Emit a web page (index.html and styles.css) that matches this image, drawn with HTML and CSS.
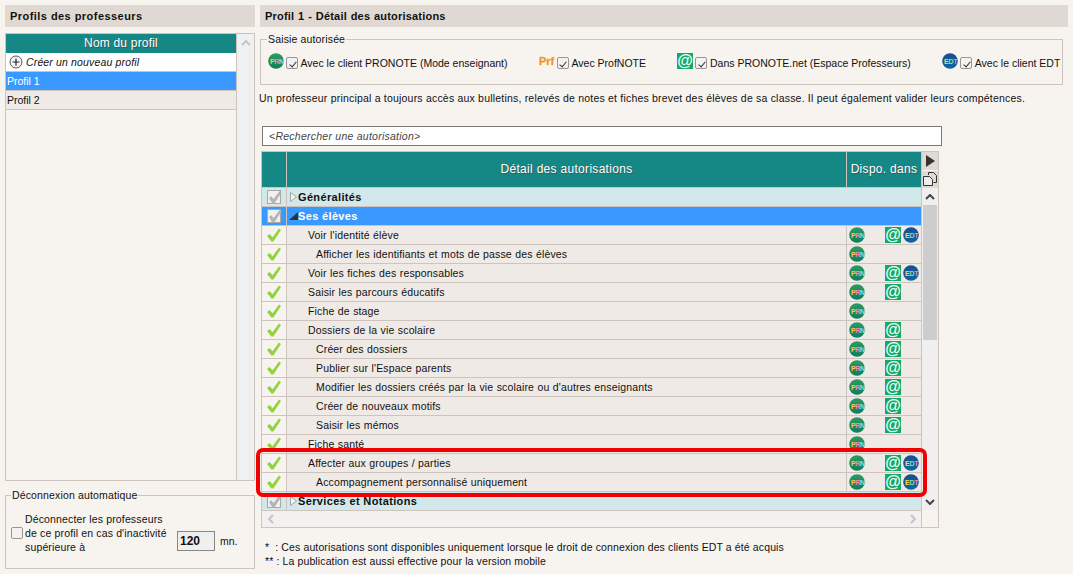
FILE: index.html
```html
<!DOCTYPE html>
<html lang="fr">
<head>
<meta charset="utf-8">
<title>Profils des professeurs</title>
<link rel="stylesheet" href="styles.css">
</head>
<body>
<svg class="defs" width="0" height="0" aria-hidden="true">
  <defs>
    <linearGradient id="gp" x1="0" y1="0" x2="0" y2="1"><stop offset="0" stop-color="#2f9a62"/><stop offset="1" stop-color="#0c7f5c"/></linearGradient>
    <linearGradient id="ge" x1="0" y1="0" x2="0" y2="1"><stop offset="0" stop-color="#1b4e90"/><stop offset="1" stop-color="#0b68a0"/></linearGradient>
    <symbol id="prn" viewBox="0 0 16 16">
      <circle cx="8" cy="8" r="7.8" fill="url(#gp)"/>
      <text x="2" y="10.8" class="t" fill="#f6c94a">P</text>
      <text x="6.3" y="10.8" class="t" fill="#f08ab0">R</text>
      <text x="11" y="10.8" class="t" fill="#8fdcee">N</text>
    </symbol>
    <symbol id="edt" viewBox="0 0 16 16">
      <circle cx="8" cy="8" r="7.8" fill="url(#ge)"/>
      <text x="2" y="10.8" class="t" fill="#f6d84a">E</text>
      <text x="6.4" y="10.8" class="t" fill="#8fe0a0">D</text>
      <text x="11.2" y="10.8" class="t" fill="#f08ab0">T</text>
    </symbol>
    <symbol id="at" viewBox="0 0 16 16">
      <rect width="16" height="16" fill="#14a86c"/>
      <text x="8" y="13" class="a" text-anchor="middle" fill="#e9fff4">@</text>
    </symbol>
    <symbol id="prf" viewBox="0 0 16 16">
      <text x="0" y="12" class="p" fill="#e8801c" stroke="#f8c040" stroke-width=".4">Prf</text>
    </symbol>
    <symbol id="ok" viewBox="0 0 16 16">
      <path d="M1 9l2.6-2 3 3.2L13 1.5l2 1.4-7.6 11.6h-2z" fill="#93d33f"/>
    </symbol>
    <symbol id="grey" viewBox="0 0 16 16">
      <rect x="1.5" y="1.5" width="13" height="13" fill="#f0f0f0" stroke="#a8a8a8"/>
      <path d="M3 9l2.2-1.8 2.4 2.8L13.6 2l1.9 1.4-7.2 11.1h-2z" fill="#b4b4b4"/>
    </symbol>
    <symbol id="plus" viewBox="0 0 14 14">
      <circle cx="7" cy="7" r="6" fill="#f4f4f4" stroke="#555"/>
      <path d="M3.5 7h7M7 3.5v7" stroke="#222" stroke-width="1.2"/>
    </symbol>
    <symbol id="copy" viewBox="0 0 14 14">
      <path d="M5.5 3V.5h5l3 3v7h-3" fill="none" stroke="#333"/>
      <path d="M.5 4.5h6l3 3v6h-9z" fill="#eee" stroke="#333"/>
    </symbol>
    <symbol id="twc" viewBox="0 0 9 12">
      <path d="M1.5 1.5l6 4.5-6 4.5z" fill="#f6f6f6" stroke="#a4a4a4"/>
    </symbol>
  </defs>
</svg>

<div class="page">
  <aside class="left">
    <h2 class="bar">Profils des professeurs</h2>
    <div class="plist">
      <div class="plist-main">
        <div class="thead">Nom du profil</div>
        <div class="prow new"><svg class="ic14"><use href="#plus"/></svg><span>Créer un nouveau profil</span></div>
        <div class="prow sel">Profil 1</div>
        <div class="prow">Profil 2</div>
      </div>
      <div class="plist-scroll"><svg class="chev" viewBox="0 0 10 6"><path d="M1 5l4-4 4 4" fill="none" stroke="#c4c4c4" stroke-width="2"/></svg></div>
    </div>
    <fieldset class="auto">
      <legend>Déconnexion automatique</legend>
      <div class="auto-body">
        <span class="cb"></span>
        <p class="auto-text">Déconnecter les professeurs<br>de ce profil en cas d'inactivité<br>supérieure à</p>
        <span class="num">120</span>
        <span class="unit">mn.</span>
      </div>
    </fieldset>
  </aside>

  <main class="right">
    <h2 class="bar wide">Profil 1 - Détail des autorisations</h2>
    <fieldset class="saisie">
      <legend>Saisie autorisée</legend>
      <div class="opts">
        <label class="opt"><svg class="ic16"><use href="#prn"/></svg><span class="cb on"></span>Avec le client PRONOTE (Mode enseignant)</label>
        <label class="opt"><svg class="ic16"><use href="#prf"/></svg><span class="cb on"></span>Avec ProfNOTE</label>
        <label class="opt"><svg class="ic16"><use href="#at"/></svg><span class="cb on"></span>Dans PRONOTE.net (Espace Professeurs)</label>
        <label class="opt"><svg class="ic16"><use href="#edt"/></svg><span class="cb on"></span>Avec le client EDT</label>
      </div>
    </fieldset>
    <p class="note">Un professeur principal a toujours accès aux bulletins, relevés de notes et fiches brevet des élèves de sa classe. Il peut également valider leurs compétences.</p>
    <div class="search">&lt;Rechercher une autorisation&gt;</div>

    <div class="grid">
      <div class="ghead">
        <div class="gh h1"></div>
        <div class="gh h2">Détail des autorisations</div>
        <div class="gh h3">Dispo. dans</div>
        <div class="gtools">
          <span class="tool"><svg class="tri" viewBox="0 0 9 12"><path d="M0 0l9 6-9 6z" fill="#333"/></svg></span>
          <span class="tool"><svg class="ic14"><use href="#copy"/></svg></span>
        </div>
      </div>
      <div class="gbody">
        <div class="rows">
          <div class="row group"><div class="c1"><svg class="ic16"><use href="#grey"/></svg></div><div class="c2"><svg class="tw"><use href="#twc"/></svg>Généralités</div><div class="c3"></div></div>
          <div class="row group sel"><div class="c1"><svg class="ic16"><use href="#grey"/></svg></div><div class="c2"><i class="tw open"></i>Ses élèves</div><div class="c3"></div></div>

          <div class="row l1"><div class="c1"><svg class="ic16"><use href="#ok"/></svg></div><div class="c2">Voir l'identité élève</div><div class="c3"><svg class="ic16"><use href="#prn"/></svg><svg class="ic16 s2"><use href="#at"/></svg><svg class="ic16 s3"><use href="#edt"/></svg></div></div>
          <div class="row l2"><div class="c1"><svg class="ic16"><use href="#ok"/></svg></div><div class="c2">Afficher les identifiants et mots de passe des élèves</div><div class="c3"><svg class="ic16"><use href="#prn"/></svg></div></div>
          <div class="row l1"><div class="c1"><svg class="ic16"><use href="#ok"/></svg></div><div class="c2">Voir les fiches des responsables</div><div class="c3"><svg class="ic16"><use href="#prn"/></svg><svg class="ic16 s2"><use href="#at"/></svg><svg class="ic16 s3"><use href="#edt"/></svg></div></div>
          <div class="row l1"><div class="c1"><svg class="ic16"><use href="#ok"/></svg></div><div class="c2">Saisir les parcours éducatifs</div><div class="c3"><svg class="ic16"><use href="#prn"/></svg><svg class="ic16 s2"><use href="#at"/></svg></div></div>
          <div class="row l1"><div class="c1"><svg class="ic16"><use href="#ok"/></svg></div><div class="c2">Fiche de stage</div><div class="c3"><svg class="ic16"><use href="#prn"/></svg></div></div>
          <div class="row l1"><div class="c1"><svg class="ic16"><use href="#ok"/></svg></div><div class="c2">Dossiers de la vie scolaire</div><div class="c3"><svg class="ic16"><use href="#prn"/></svg><svg class="ic16 s2"><use href="#at"/></svg></div></div>
          <div class="row l2"><div class="c1"><svg class="ic16"><use href="#ok"/></svg></div><div class="c2">Créer des dossiers</div><div class="c3"><svg class="ic16"><use href="#prn"/></svg><svg class="ic16 s2"><use href="#at"/></svg></div></div>
          <div class="row l2"><div class="c1"><svg class="ic16"><use href="#ok"/></svg></div><div class="c2">Publier sur l'Espace parents</div><div class="c3"><svg class="ic16"><use href="#prn"/></svg><svg class="ic16 s2"><use href="#at"/></svg></div></div>
          <div class="row l2"><div class="c1"><svg class="ic16"><use href="#ok"/></svg></div><div class="c2">Modifier les dossiers créés par la vie scolaire ou d'autres enseignants</div><div class="c3"><svg class="ic16"><use href="#prn"/></svg><svg class="ic16 s2"><use href="#at"/></svg></div></div>
          <div class="row l2"><div class="c1"><svg class="ic16"><use href="#ok"/></svg></div><div class="c2">Créer de nouveaux motifs</div><div class="c3"><svg class="ic16"><use href="#prn"/></svg><svg class="ic16 s2"><use href="#at"/></svg></div></div>
          <div class="row l2"><div class="c1"><svg class="ic16"><use href="#ok"/></svg></div><div class="c2">Saisir les mémos</div><div class="c3"><svg class="ic16"><use href="#prn"/></svg><svg class="ic16 s2"><use href="#at"/></svg></div></div>
          <div class="row l1"><div class="c1"><svg class="ic16"><use href="#ok"/></svg></div><div class="c2">Fiche santé</div><div class="c3"><svg class="ic16"><use href="#prn"/></svg></div></div>
          <div class="row l1"><div class="c1"><svg class="ic16"><use href="#ok"/></svg></div><div class="c2">Affecter aux groupes / parties</div><div class="c3"><svg class="ic16"><use href="#prn"/></svg><svg class="ic16 s2"><use href="#at"/></svg><svg class="ic16 s3"><use href="#edt"/></svg></div></div>
          <div class="row l2"><div class="c1"><svg class="ic16"><use href="#ok"/></svg></div><div class="c2">Accompagnement personnalisé uniquement</div><div class="c3"><svg class="ic16"><use href="#prn"/></svg><svg class="ic16 s2"><use href="#at"/></svg><svg class="ic16 s3"><use href="#edt"/></svg></div></div>
          <div class="row group"><div class="c1"><svg class="ic16"><use href="#grey"/></svg></div><div class="c2"><svg class="tw"><use href="#twc"/></svg>Services et Notations</div><div class="c3"></div></div>
        </div>
        <div class="vscroll">
          <svg class="chev up" viewBox="0 0 10 6"><path d="M1 5l4-4 4 4" fill="none" stroke="#444" stroke-width="2"/></svg>
          <div class="thumb"></div>
          <svg class="chev down" viewBox="0 0 10 6"><path d="M1 1l4 4 4-4" fill="none" stroke="#444" stroke-width="2"/></svg>
        </div>
      </div>
      <div class="hscroll">
        <svg class="hchev" viewBox="0 0 6 10"><path d="M5 1L1 5l4 4" fill="none" stroke="#c4c4c4" stroke-width="2"/></svg>
        <svg class="hchev" viewBox="0 0 6 10"><path d="M1 1l4 4-4 4" fill="none" stroke="#c4c4c4" stroke-width="2"/></svg>
      </div>
    </div>

    <p class="foot">* &nbsp;: Ces autorisations sont disponibles uniquement lorsque le droit de connexion des clients EDT a été acquis<br>** : La publication est aussi effective pour la version mobile</p>
  </main>
</div>
<div class="highlight"></div>
</body>
</html>
```

FILE: styles.css
```css
* { box-sizing: border-box; }
html, body { margin: 0; height: 100%; }
body {
  background: #f7f3ef;
  color: #111;
  font: 10.5px/14px "Liberation Sans", Arial, sans-serif;
  overflow: hidden;
  position: relative;
}
.defs { position: absolute; }
.t { font: bold 7px "Liberation Sans", sans-serif; letter-spacing: 0; word-spacing: 0; }
.a { font: bold 16px "Liberation Sans", sans-serif; letter-spacing: 0; }
.p { font: bold 11px "Liberation Sans", sans-serif; letter-spacing: 0; }

.page { display: flex; gap: 5px; height: 574px; padding: 5px; }
.left { width: 250px; display: flex; flex-direction: column; }
.right { width: 808px; display: flex; flex-direction: column; }

.bar {
  margin: 0;
  height: 22px;
  flex: none;
  background: #e0d9d3;
  padding-left: 5px;
  font: bold 11px/22px "Liberation Sans", Arial, sans-serif;
  letter-spacing: .45px;
  color: #111;
}
.bar.wide { letter-spacing: .2px; word-spacing: .5px; }

/* profile list */
.plist {
  margin-top: 6px;
  height: 448px;
  flex: none;
  display: flex;
  border: 1px solid #cdc5bd;
}
.plist-main { flex: 1; background: #f7f3ef; border-right: 1px solid #cdc5bd; }
.thead {
  height: 19px;
  background: #158784;
  color: #fff;
  text-align: center;
  font-size: 12px;
  line-height: 19px;
  text-shadow: 1px 1px 0 #3c5a58;
  letter-spacing: .2px;
}
.prow {
  height: 19px;
  line-height: 18px;
  padding-left: 1px;
  background: #efeae6;
  border-bottom: 1px solid #cdc5bd;
}
.prow.new {
  background: #fff;
  font-style: italic;
  display: flex;
  align-items: center;
  gap: 3px;
  padding-left: 3px;
  letter-spacing: .15px;
}
.prow.sel { background: #3a99ff; color: #fff; }
.plist-scroll { width: 17px; background: #eff0f2; display: flex; justify-content: center; padding-top: 6px; }
.chev { width: 10px; height: 6px; display: block; flex: none; }
.ic14 { width: 14px; height: 14px; flex: none; }
.ic16 { width: 16px; height: 16px; flex: none; display: block; }

/* fieldsets */
fieldset { margin: 0; padding: 0; border: 1px solid #cdc5bd; min-width: 0; }
legend { padding: 0 1px; margin-left: 6px; line-height: 12px; letter-spacing: .15px; }

.auto { margin-top: auto; height: 80px; flex: none; }
.auto legend { margin-left: 5px; }
.auto-body { display: flex; align-items: center; padding: 11px 0 0 5px; }
.cb {
  width: 12px; height: 12px; flex: none;
  background: #f4f2f1;
  border: 1px solid #9a9590;
  border-radius: 2px;
  position: relative;
}
.cb.on::after {
  content: "";
  position: absolute; left: 3.5px; top: 1.5px;
  width: 3px; height: 6px;
  border: solid #333;
  border-width: 0 1.5px 1.5px 0;
  transform: rotate(40deg);
}
.auto-text { margin: 0 0 0 2px; width: 152px; white-space: nowrap; letter-spacing: .15px; }
.num {
  width: 38px; height: 20px; margin-top: 16px;
  border: 1px solid #8a8580;
  background: #efefef;
  font-weight: bold;
  line-height: 18px;
  padding-left: 2px;
  font-size: 12px;
}
.unit { margin: 16px 0 0 5px; }

.saisie { height: 52px; margin-top: 6px; width: 803px; flex: none; }
.opts { display: flex; gap: 31.5px; padding: 9px 0 0 7px; }
.opt { display: flex; align-items: center; white-space: nowrap; height: 18px; }
.opt .ic16 { margin-top: -4px; }
.opt .cb { margin: 0 2.5px 0 2px; }

.note { margin: 6px 0 0 -1px; white-space: nowrap; line-height: 14px; letter-spacing: .2px; }

.search {
  margin: 21px 0 0 2px;
  width: 680px; height: 20px;
  flex: none;
  background: #fff;
  border: 1px solid #807870;
  font-style: italic;
  color: #444;
  padding-left: 6px;
  line-height: 19px;
  letter-spacing: .25px;
}

/* authorisation table */
.grid { margin: 5px 0 0 1px; width: 678px; height: 377px; flex: none; border: 1px solid #cdc5bd; border-top: 0; display: flex; flex-direction: column; }
.ghead { display: flex; height: 37px; flex: none; border-top: 1px solid #cdc5bd; }
.gh {
  background: #158784;
  color: #fff;
  font-size: 12px;
  line-height: 35px;
  letter-spacing: .3px;
  text-align: center;
  text-shadow: 1px 1px 0 #3c5a58;
  border-bottom: 1px solid #cdc5bd;
  flex: none;
}
.h1 { width: 24px; }
.h2 { width: 560px; border-left: 1px solid #cdc5bd; }
.h3 { width: 75px; border-left: 1px solid #cdc5bd; white-space: nowrap; }
.c1 { width: 25px; flex: none; }
.c2 { width: 559px; flex: none; }
.c3 { width: 75px; flex: none; }
.gtools { flex: 1; display: flex; flex-direction: column; gap: 1px; border-left: 1px solid #cdc5bd; }
.tool { height: 17px; flex: 1; background: #e0dad4; display: flex; align-items: center; justify-content: center; }
.tri { width: 9px; height: 12px; }

.gbody { display: flex; height: 322px; flex: none; }
.rows { flex: none; width: 659px; overflow: hidden; }
.row { display: flex; height: 19px; border-bottom: 1px solid #cdc5bd; }
.row > div { display: flex; align-items: center; }
.row .c1 { background: #f7f3ef; justify-content: center; border-right: 1px solid #cdc5bd; }
.row .c2 { background: #efeae6; white-space: nowrap; letter-spacing: .15px; word-spacing: .3px; }
.row .c3 { background: #efeae6; border-left: 1px solid #cdc5bd; padding-left: 2px; }
.l1 .c2 { padding-left: 21px; }
.l2 .c2 { padding-left: 29px; }
.s2 { margin-left: 20px; }
.s3 { margin-left: 2px; }

.row.group > div { background: #d3e8ea; }
.row.group .c1 { background: #d3e8ea; }
.row.group .c2 { font-weight: bold; font-size: 11px; letter-spacing: .35px; word-spacing: 0; padding-left: 2px; }
.row.group.sel > div { background: #3a99ff; color: #fff; }
.row.group .c3 { border-left: 0; }
.tw { width: 9px; height: 12px; flex: none; display: block; }
.tw.open { height: 8px; background: #333; clip-path: polygon(100% 0, 100% 100%, 0 100%); }

.vscroll { flex: 1; background: #f0efee; border-left: 1px solid #cdc5bd; position: relative; display: flex; flex-direction: column; align-items: center; padding-top: 6px; }
.thumb { position: absolute; top: 17px; left: 0; right: 0; height: 135px; background: #cdcdcd; margin: 0 1px; }
.vscroll .chev.down { margin-top: auto; margin-bottom: 5px; }

.hscroll { flex: 1; background: #f3f1ef; border-top: 1px solid #cdc5bd; border-right: 1px solid #cdc5bd; width: 660px; display: flex; justify-content: space-between; align-items: center; padding: 0 5px 0 6px; }
.hchev { width: 6px; height: 10px; }

.foot { margin: 12px 0 0 5px; line-height: 14px; letter-spacing: .12px; }

/* annotation drawn over the screenshot */
.highlight {
  position: absolute;
  left: 256px; top: 448px;
  width: 671px; height: 49px;
  border: 4px solid #f00000;
  border-radius: 7px;
  pointer-events: none;
}
```
